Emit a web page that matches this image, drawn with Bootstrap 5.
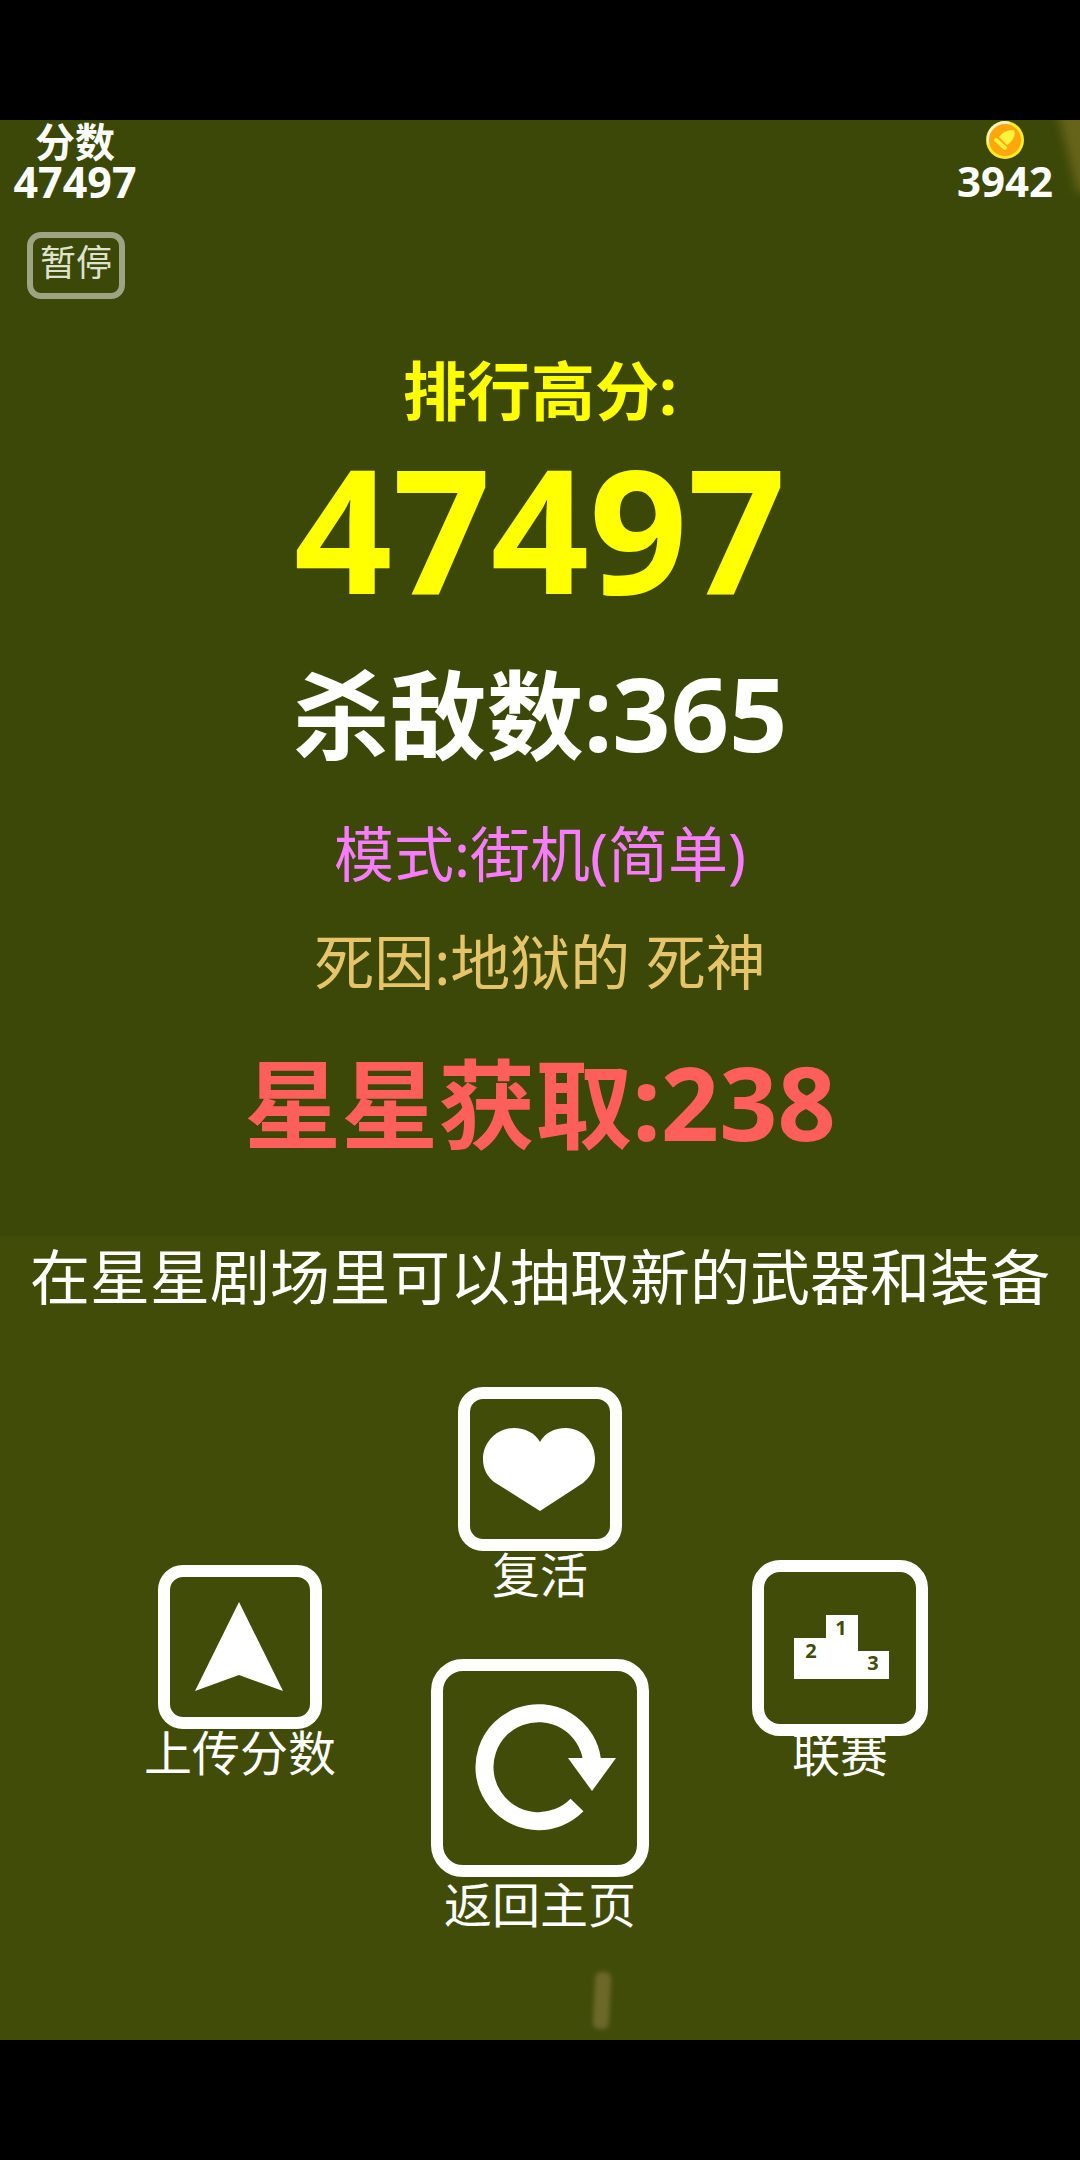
<!DOCTYPE html>
<html lang="zh-CN">
<head>
<meta charset="utf-8">
<meta name="viewport" content="width=device-width, initial-scale=1">
<title>排行高分</title>
<link href="https://cdn.jsdelivr.net/npm/bootstrap@5.3.0/dist/css/bootstrap.min.css" rel="stylesheet">
<style>
body { background: #000; font-family: "Noto Sans", "Noto Sans CJK SC", sans-serif; padding: 120px 0; }
.stage { background: linear-gradient(#3c4807 0 1116px, #424c09 1116px); min-height: calc(100vh - 240px); overflow: hidden; }
.corner-streak { top: -40px; right: -22px; width: 38px; height: 110px; background: #66641a; filter: blur(5px); transform: rotate(-14deg); }
.spark { bottom: 11px; left: 55%; width: 16px; height: 57px; border-radius: 6px; background: #6c6827; filter: blur(2px); transform: rotate(3deg); }
.hud { width: 150px; }
.hud-label { font-size: 40px; line-height: 44px; }
.hud-num { font-size: 43px; line-height: 36px; }
.hud-coins { font-size: 42px; line-height: 36px; }
.coin-icon { width: 40px; height: 40px; margin-bottom: 3px; }
.pause-btn { width: 98px; height: 67px; margin: 32px 0 0 27px; border: 6px solid #9ea383; border-radius: 14px; color: #dfe2cc; font-size: 36px; line-height: 50px; }
.best-title { font-size: 64px; line-height: 80px; margin-top: 52px; color: #ff0; }
.score { font-size: 172px; line-height: 180px; margin-top: 6px; color: #ff0; }
.stat { font-size: 102px; line-height: 120px; }
.stat span { font-size: 97px; }
.kills { margin-top: 36px; }
.info { font-size: 60px; line-height: 80px; }
.mode { color: #f87cff; margin-top: 40px; }
.cause { color: #e6c56a; margin-top: 28px; }
.stars { color: #ff5f5a; margin-top: 40px; }
.hint { margin-top: 74px; }
.actions { margin-top: 70px; padding: 0 90px; }
.tile { color: #fff; font-size: 48px; line-height: 48px; }
.tile .frame { width: 164px; height: 164px; border: 12px solid #fff; border-radius: 25px; }
.tile .frame-md { width: 176px; height: 176px; border-radius: 28px; }
.tile .frame-lg { width: 218px; height: 218px; border-radius: 32px; margin-bottom: 4px; }
.tile svg { display: block; width: 100%; height: 100%; }
.drop { margin-top: 178px; }
.drop-league { margin-top: 173px; }
.tuck { margin-top: -6px; }
.home { margin-top: 60px; }
</style>
</head>
<body>
<main class="stage position-relative text-white d-flex flex-column">
  <div class="corner-streak position-absolute"></div>
  <div class="spark position-absolute"></div>
  <header class="d-flex justify-content-between fw-bold text-center">
    <div class="hud"><div class="hud-label">分数</div><div class="hud-num">47497</div></div>
    <div class="hud">
      <svg class="coin-icon d-block mx-auto" viewBox="0 0 40 40" aria-hidden="true">
        <circle cx="20" cy="20" r="19" fill="#ffe928"/>
        <path d="M3 25A18 18 0 0 1 25 2L23 7 7 21Z" fill="#fff4d0"/>
        <circle cx="20" cy="20" r="16" fill="#ffa60c"/>
        <path d="M14 17Q19 10 28 10Q31 11 29 17Q26 23 22 25Z" fill="#fff33c"/>
        <path d="M11 20L20 28" stroke="#fff33c" stroke-width="4" stroke-linecap="round"/>
      </svg>
      <div class="hud-coins">3942</div>
    </div>
  </header>
  <button type="button" class="pause-btn bg-transparent p-0 d-flex justify-content-center">暂停</button>

  <section class="text-center text-nowrap">
    <h1 class="best-title fw-bold mb-0">排行高分:</h1>
    <div class="score fw-bold">47497</div>
    <div class="stat kills fw-bold"><span>杀敌数</span>:365</div>
    <div class="info mode">模式:街机(简单)</div>
    <div class="info cause">死因:地狱的 死神</div>
    <div class="stat stars fw-bold"><span>星星获取</span>:238</div>
    <p class="info hint mb-0">在星星剧场里可以抽取新的武器和装备</p>
  </section>

  <nav class="actions row g-0 text-center">
    <div class="col-4 d-flex flex-column align-items-center">
      <button type="button" class="tile drop bg-transparent border-0 p-0 d-flex flex-column align-items-center">
        <span class="frame"><svg viewBox="0 0 140 140" aria-hidden="true"><path fill="#fff" d="M69 25L113 114 69 98 25 114Z"/></svg></span>
        <span>上传分数</span>
      </button>
    </div>
    <div class="col-4 d-flex flex-column align-items-center">
      <button type="button" class="tile bg-transparent border-0 p-0 d-flex flex-column align-items-center">
        <span class="frame"><svg viewBox="0 0 140 140" aria-hidden="true"><path fill="#fff" d="M70 112L24 83C17 77 13 70 13 60C13 43 27 29 44 29C55 29 65 34 70 43C75 34 84 29 96 29C112 29 125 43 125 60C125 70 121 77 113 84Z"/></svg></span>
        <span>复活</span>
      </button>
      <button type="button" class="tile home bg-transparent border-0 p-0 d-flex flex-column align-items-center">
        <span class="frame frame-lg"><svg viewBox="0 0 194 194" aria-hidden="true"><path d="M149 89A54 54 0 1 0 134 134" fill="none" stroke="#fff" stroke-width="18"/><path d="M125 87H173L149 120Z" fill="#fff"/></svg></span>
        <span>返回主页</span>
      </button>
    </div>
    <div class="col-4 d-flex flex-column align-items-center">
      <button type="button" class="tile drop-league bg-transparent border-0 p-0 d-flex flex-column align-items-center">
        <span class="frame frame-md"><svg viewBox="0 0 152 152" aria-hidden="true"><path fill="#fff" d="M30 66H62V43H94V79H125V107H30Z"/><g fill="#424c09" font-size="20" font-weight="700" text-anchor="middle"><text x="77" y="63">1</text><text x="47" y="86">2</text><text x="109" y="98">3</text></g></svg></span>
        <span class="tuck">联赛</span>
      </button>
    </div>
  </nav>
</main>
<script src="https://cdn.jsdelivr.net/npm/bootstrap@5.3.0/dist/js/bootstrap.bundle.min.js"></script>
</body>
</html>
